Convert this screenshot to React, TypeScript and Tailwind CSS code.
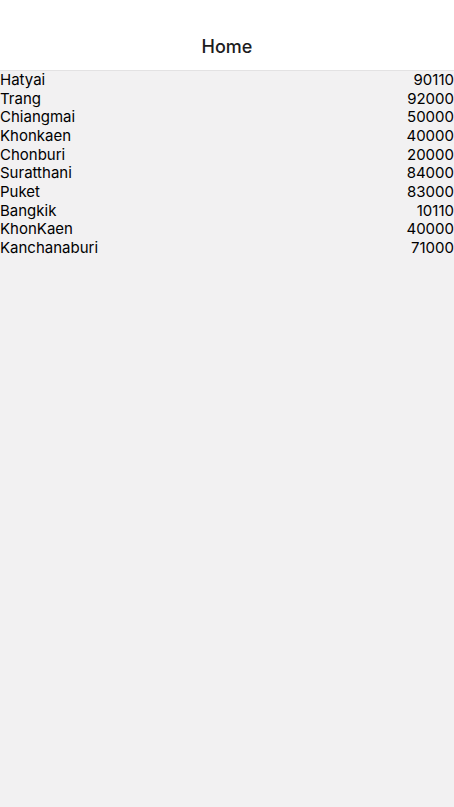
const places = [
  { name: "Hatyai", zip: "90110" },
  { name: "Trang", zip: "92000" },
  { name: "Chiangmai", zip: "50000" },
  { name: "Khonkaen", zip: "40000" },
  { name: "Chonburi", zip: "20000" },
  { name: "Suratthani", zip: "84000" },
  { name: "Puket", zip: "83000" },
  { name: "Bangkik", zip: "10110" },
  { name: "KhonKaen", zip: "40000" },
  { name: "Kanchanaburi", zip: "71000" },
];

const App = () => {
  return (
    <div
      className="w-full h-[807px] flex flex-col bg-[#f2f1f2] text-black"
      style={{ fontFamily: "Inter, 'Noto Sans', sans-serif" }}
    >
      <header className="bg-white pt-[22px] h-[71px] border-b border-[#e3e2e3] flex items-center justify-center">
        <h1 className="text-[18px] font-medium text-[#1c1c1e]">Home</h1>
      </header>
      <div className="flex flex-col">
        {places.map((p) => (
          <div
            key={p.name}
            className="flex justify-between text-[15px] leading-[18.67px]"
          >
            <span>{p.name}</span>
            <span>{p.zip}</span>
          </div>
        ))}
      </div>
    </div>
  );
};

export default App;
